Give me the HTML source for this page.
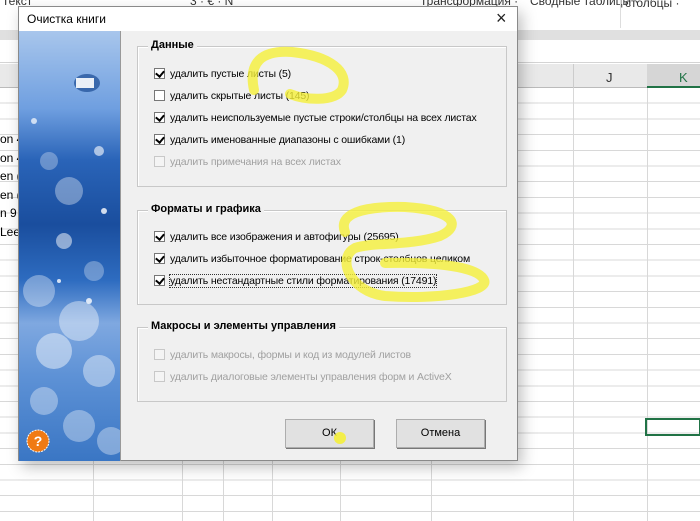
<!DOCTYPE html>
<html><head><meta charset="utf-8"><style>
*{margin:0;padding:0;box-sizing:border-box}
body{width:700px;height:521px;overflow:hidden;position:relative;background:#fff;font-family:"Liberation Sans","DejaVu Sans",sans-serif;font-size:11px;color:#000}
.abs{position:absolute}
.grid{left:0;top:88px;width:700px;height:433px;
background-image:repeating-linear-gradient(to bottom,transparent 0,transparent 14.7px,#d8d8d8 14.7px,#d8d8d8 15.7px)}
.vl{position:absolute;top:88px;width:1px;height:433px;background:#d8d8d8}
.dlg{left:18px;top:6px;width:500px;height:455px;background:#f0f0f0;border:1px solid #8a8a8a;box-shadow:4px 6px 14px rgba(0,0,0,.25)}
.title{left:0;top:0;width:498px;height:24px;background:#fff;font-size:12px;padding:5px 0 0 8px}
.img{left:0;top:24px;width:101px;height:430px;overflow:hidden;
background:linear-gradient(to bottom,#a8c6ec 0%,#6f9fe0 18%,#2a64b8 30%,#1a4e9e 45%,#2e6cc0 58%,#7fa8e0 68%,#5e92d6 80%,#3a76c4 100%)}
.grp{position:absolute;border:1px solid #c8c8c8;box-shadow:inset 1px 1px 0 #fff}
.grp .lg{position:absolute;left:10px;top:-8px;background:#f0f0f0;padding:0 3px;font-weight:bold;font-size:11px}
.row{position:absolute;left:16px;height:14px;line-height:14px;white-space:nowrap;font-size:10.5px;letter-spacing:-0.15px}
.cb{display:inline-block;width:11px;height:11px;border:1px solid #777;background:#fff;vertical-align:-2px;margin-right:5px;position:relative}
.cb.on::after{content:"";position:absolute;left:2px;top:0px;width:4px;height:6px;border:solid #000;border-width:0 2px 2px 0;transform:rotate(40deg)}
.dis{color:#a0a0a0}.dis .cb{border-color:#c8c8c8;background:#f4f4f4}
.btn{position:absolute;top:412px;width:89px;height:29px;border:1px solid #adadad;background:#e1e1e1;text-align:center;line-height:27px;font-size:11px;box-shadow:1px 1px 0 #777}
</style></head><body>
<div class="abs" style="left:0;top:0;width:700px;height:30px;background:#fff;font-size:12px;color:#333">
<span class="abs" style="left:2px;top:-6px">Текст</span>
<span class="abs" style="left:190px;top:-6px">3 · € · N</span>
<span class="abs" style="left:420px;top:-6px">Трансформация ·</span>
<span class="abs" style="left:530px;top:-6px">Сводные таблицы ·</span>
<span class="abs" style="left:625px;top:-4px">столбцы ·</span>
<div class="abs" style="left:620px;top:0;width:1px;height:28px;background:#ddd"></div>
</div>
<div class="abs" style="left:0;top:30px;width:700px;height:10px;background:#e0e0e0"></div>
<div class="abs" style="left:0;top:40px;width:700px;height:23px;background:#fff;border-bottom:1px solid #d4d4d4"></div>
<div class="abs" style="left:0;top:64px;width:700px;height:24px;background:#e9e9e9;border-bottom:1px solid #bbb"></div>
<div class="abs" style="left:647px;top:64px;width:53px;height:24px;background:#d6d6d6;border-bottom:2px solid #217346"></div>
<span class="abs" style="left:606px;top:70px;font-size:13px;color:#333">J</span>
<span class="abs" style="left:679px;top:70px;font-size:13px;color:#217346">K</span>
<div class="abs" style="left:573px;top:64px;width:1px;height:24px;background:#ccc"></div>
<div class="abs grid"></div>
<div class="vl" style="left:93px"></div><div class="vl" style="left:182px"></div><div class="vl" style="left:223px"></div><div class="vl" style="left:272px"></div><div class="vl" style="left:340px"></div><div class="vl" style="left:431px"></div><div class="vl" style="left:573px"></div><div class="vl" style="left:647px"></div>
<div class="abs" style="left:645px;top:418px;width:56px;height:18px;border:2px solid #217346"></div>
<div class="abs" style="left:0;top:130px;font-size:12px;line-height:18.5px">on 4<br>on 4<br>en (<br>en (<br>n 9<br>Lee</div>

<div class="abs dlg">
<div class="abs title">Очистка книги<span class="abs" style="left:477px;top:1px;font-size:18px;font-weight:normal;color:#222">×</span></div>
<div class="abs img">
<svg width="101" height="430" style="position:absolute;left:0;top:0">
<g fill="#fff">
<ellipse cx="68" cy="52" rx="13" ry="9" fill="#1b4c94" opacity=".7"/>
<rect x="57" y="47" width="18" height="10" opacity=".9"/>
<circle cx="50" cy="160" r="14" opacity=".35"/>
<circle cx="30" cy="130" r="9" opacity=".3"/>
<circle cx="80" cy="120" r="5" opacity=".6"/>
<circle cx="45" cy="210" r="8" opacity=".5"/>
<circle cx="75" cy="240" r="10" opacity=".3"/>
<circle cx="20" cy="260" r="16" opacity=".35"/>
<circle cx="60" cy="290" r="20" opacity=".4"/>
<circle cx="35" cy="320" r="18" opacity=".45"/>
<circle cx="80" cy="340" r="16" opacity=".4"/>
<circle cx="25" cy="370" r="14" opacity=".35"/>
<circle cx="60" cy="395" r="16" opacity=".35"/>
<circle cx="92" cy="410" r="14" opacity=".35"/>
<circle cx="15" cy="90" r="3" opacity=".7"/><circle cx="85" cy="180" r="3" opacity=".8"/><circle cx="40" cy="250" r="2" opacity=".8"/><circle cx="70" cy="270" r="3" opacity=".8"/>
</g>
<circle cx="19" cy="410" r="11" fill="#f07a14" stroke="#fff" stroke-width="1" stroke-dasharray="2 1"/>
<text x="19" y="415" font-family="Liberation Sans" font-size="14" font-weight="bold" fill="#fff" text-anchor="middle">?</text>
</svg>
</div>
<div class="abs" style="left:101px;top:24px;width:1px;height:430px;background:#999"></div>

<div class="grp" style="left:118px;top:39px;width:370px;height:141px"><span class="lg">Данные</span>
<div class="row" style="top:20px"><span class="cb on"></span>удалить пустые листы (5)</div>
<div class="row" style="top:42px"><span class="cb"></span>удалить скрытые листы (145)</div>
<div class="row" style="top:64px"><span class="cb on"></span>удалить неиспользуемые пустые строки/столбцы на всех листах</div>
<div class="row" style="top:86px"><span class="cb on"></span>удалить именованные диапазоны с ошибками (1)</div>
<div class="row dis" style="top:108px"><span class="cb"></span>удалить примечания на всех листах</div>
</div>
<div class="grp" style="left:118px;top:203px;width:370px;height:95px"><span class="lg">Форматы и графика</span>
<div class="row" style="top:19px"><span class="cb on"></span>удалить все изображения и автофигуры (25695)</div>
<div class="row" style="top:41px"><span class="cb on"></span>удалить избыточное форматирование строк-столбцов целиком</div>
<div class="row" style="top:63px"><span class="cb on"></span><span style="outline:1px dotted #333">удалить нестандартные стили форматирования (17491)</span></div>
</div>
<div class="grp" style="left:118px;top:320px;width:370px;height:75px"><span class="lg">Макросы и элементы управления</span>
<div class="row dis" style="top:20px"><span class="cb"></span>удалить макросы, формы и код из модулей листов</div>
<div class="row dis" style="top:42px"><span class="cb"></span>удалить диалоговые элементы управления форм и ActiveX</div>
</div>
<div class="btn" style="left:266px">ОК</div>
<div class="btn" style="left:377px">Отмена</div>
</div>

<svg class="abs" style="left:0;top:0" width="700" height="521">
<g fill="none" stroke="#f5f03a" stroke-width="10" stroke-linecap="round" opacity=".8">
<path d="M254 90 C248 62 262 50 292 52 C330 56 350 72 342 90 C334 102 305 100 290 94"/>
<path d="M345 232 C338 214 362 206 405 207 C455 210 462 226 440 236 C410 246 372 242 355 248 C336 258 350 292 385 296 C435 300 490 292 484 280 C478 266 435 262 385 263"/>
</g>
<circle cx="340" cy="438" r="6" fill="#f5f03a" opacity=".9"/>
</svg>
</body></html>
